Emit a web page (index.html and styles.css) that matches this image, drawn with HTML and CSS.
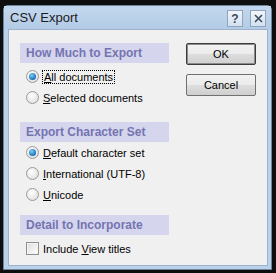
FILE: index.html
```html
<!DOCTYPE html>
<html>
<head>
  <title>CSV Export</title>
  <link rel="stylesheet" href="styles.css">
</head>
<body>
  <div class="window">
    <div class="titlebar">
      <span class="title">CSV Export</span>
      <div class="caption-buttons">
        <span class="cap-btn">?</span>
        <span class="cap-btn cap-close">
          <svg width="9" height="9" viewBox="0 0 9 9"><path d="M1 1 L8 8 M8 1 L1 8" stroke="#3b4a5c" stroke-width="1.6" fill="none"/></svg>
        </span>
      </div>
    </div>

    <div class="client">
      <div class="options">
        <div class="section section-amount">
          <div class="band">How Much to Export</div>
          <label class="row first">
            <span class="radio checked"></span>
            <span class="focus"><u>A</u>ll documents</span>
          </label>
          <label class="row">
            <span class="radio"></span>
            <span><u>S</u>elected documents</span>
          </label>
        </div>

        <div class="section section-charset">
          <div class="band">Export Character Set</div>
          <label class="row">
            <span class="radio checked"></span>
            <span><u>D</u>efault character set</span>
          </label>
          <label class="row">
            <span class="radio"></span>
            <span><u>I</u>nternational (UTF-8)</span>
          </label>
          <label class="row">
            <span class="radio"></span>
            <span><u>U</u>nicode</span>
          </label>
        </div>

        <div class="section section-detail">
          <div class="band">Detail to Incorporate</div>
          <label class="row check-row">
            <span class="checkbox"></span>
            <span>Include <u>V</u>iew titles</span>
          </label>
        </div>
      </div>

      <div class="buttons">
        <button class="btn btn-default">OK</button>
        <button class="btn">Cancel</button>
      </div>
    </div>
  </div>
</body>
</html>
```

FILE: styles.css
```css
/* Reset */
* {
  box-sizing: border-box;
  margin: 0;
  padding: 0;
}

body {
  background-color: #0e0e0e;
  font-family: "Liberation Sans", Arial, sans-serif;
  font-size: 11px;
  color: #000;
}

/* Window frame */
.window {
  width: 269px;
  height: 265px;
  margin: 5px 0 0 3px;
  border: 1px solid #6f839a;
  border-radius: 5px 5px 0 0;
  background-color: #b9d1ea;
  padding: 0 3px 3px 4px;
  display: flex;
  flex-direction: column;
}

.titlebar {
  height: 23px;
  display: flex;
  align-items: center;
  justify-content: space-between;
  background: linear-gradient(#c3d8ee, #b3cbe6);
  margin: 0 -3px 0 -4px;
  padding: 0 5px 0 6px;
}

.title {
  font-size: 13px;
  color: #1b1b1b;
}

.caption-buttons {
  display: flex;
  gap: 7px;
  margin-top: 2px;
}

.cap-btn {
  width: 16px;
  height: 17px;
  border: 1px solid #8fa5bd;
  background: linear-gradient(#f2f6fb, #d3e0ee);
  color: #3b4a5c;
  font-weight: bold;
  font-size: 12px;
  display: flex;
  align-items: center;
  justify-content: center;
}

/* Client area */
.client {
  flex: 1;
  background-color: #f0f0f0;
  border: 1px solid #9db3cb;
  display: flex;
  padding: 13px 0 0 11px;
}

.options {
  width: 149px;
}

.band {
  height: 20px;
  line-height: 20px;
  background-color: #d5d5ee;
  color: #7474b0;
  font-weight: bold;
  font-size: 12px;
  padding-left: 6px;
}

.section-charset {
  margin-top: 14px;
}

.section-detail {
  margin-top: 10px;
}

.row {
  height: 21px;
  display: flex;
  align-items: center;
  gap: 4px;
  padding-left: 6px;
}

.row.first {
  margin-top: 3px;
}

.check-row {
  margin-top: 3px;
}

.radio {
  width: 13px;
  height: 13px;
  border-radius: 50%;
  border: 1px solid #9a9a9a;
  background: radial-gradient(circle at 40% 35%, #ffffff, #d8d8d8);
  position: relative;
}

.radio.checked::after {
  content: "";
  position: absolute;
  left: 2px;
  top: 2px;
  width: 7px;
  height: 7px;
  border-radius: 50%;
  background: radial-gradient(circle at 40% 35%, #7fd0f5, #1a6fb8 70%, #0f4f8e);
}

.checkbox {
  width: 13px;
  height: 13px;
  border: 1px solid #8e8f8f;
  background: linear-gradient(135deg, #dcdcdc, #ffffff);
  box-shadow: inset 0 0 0 1px #f4f4f4;
}

.focus {
  outline: 1px dotted #000;
  outline-offset: 0;
  padding: 0 1px;
}

u {
  text-decoration: underline;
}

/* Buttons */
.buttons {
  display: flex;
  flex-direction: column;
  gap: 9px;
  margin-left: 17px;
}

.btn {
  width: 70px;
  height: 22px;
  font-family: "Liberation Sans", Arial, sans-serif;
  font-size: 11px;
  color: #000;
  border: 1px solid #707070;
  border-radius: 2px;
  background: linear-gradient(#f2f2f2 0%, #ebebeb 50%, #dddddd 51%, #cfcfcf 100%);
}

.btn-default {
  border-color: #3c3c3c;
  box-shadow: inset 0 0 0 1px #8b8b8b;
}
```
